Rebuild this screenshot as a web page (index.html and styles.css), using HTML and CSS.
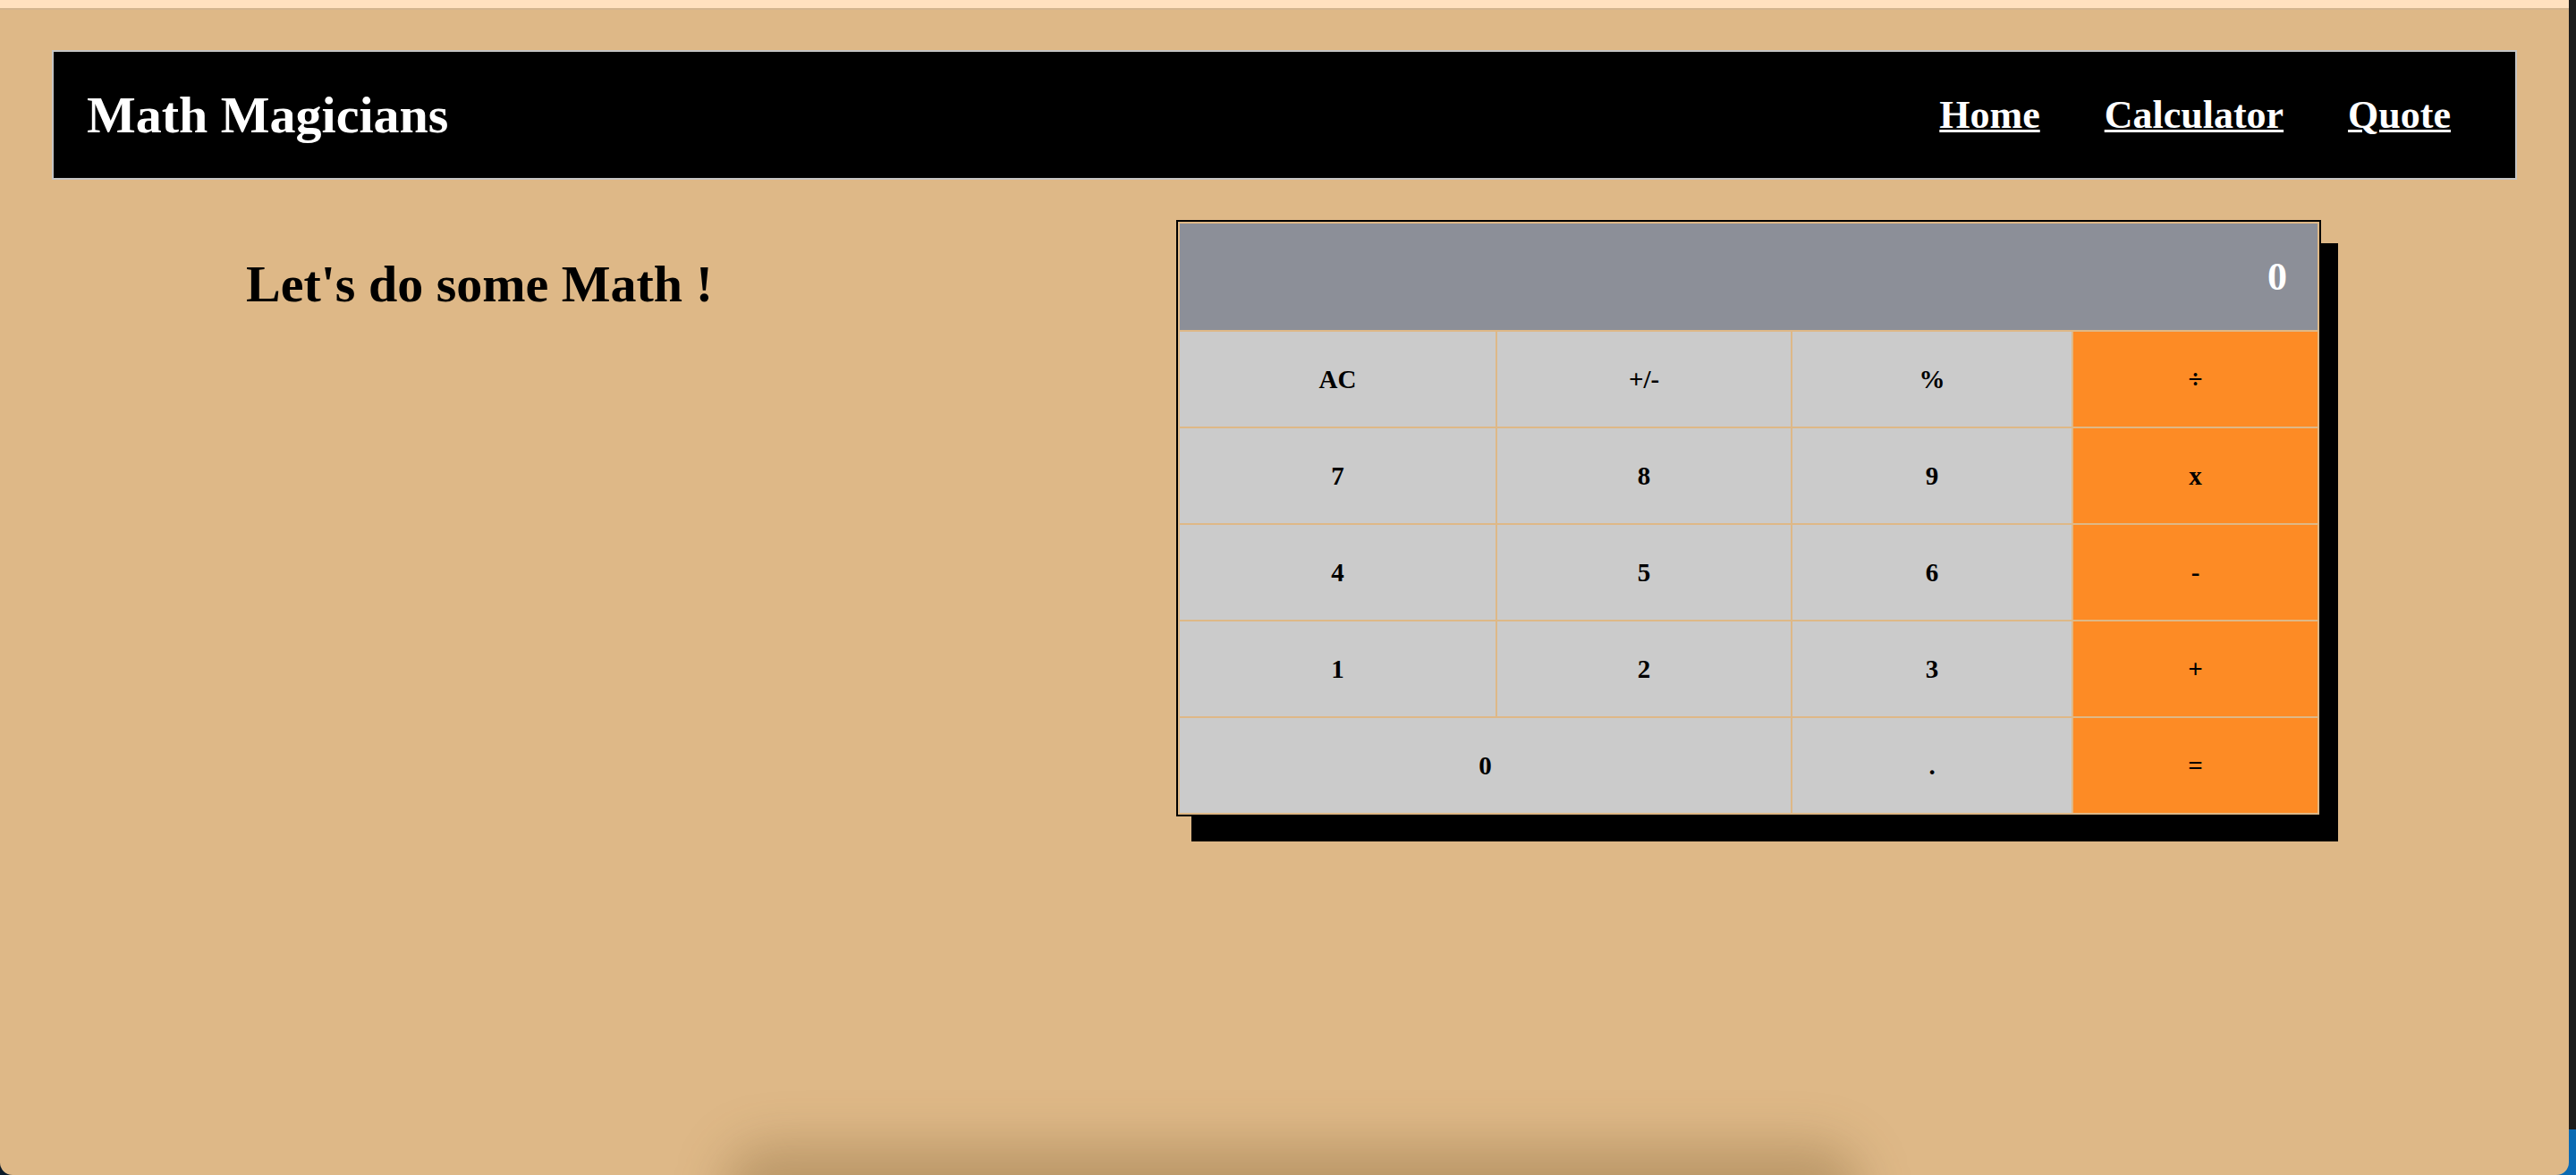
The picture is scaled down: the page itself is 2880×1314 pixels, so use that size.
FILE: index.html
```html
<!DOCTYPE html>
<html lang="en">
<head>
<meta charset="utf-8">
<title>Math Magicians</title>
<link rel="stylesheet" href="styles.css">
</head>
<body>
<div class="window">
  <div class="topstrip"></div>
  <nav class="nav">
    <h1 class="brand">Math Magicians</h1>
    <ul class="links">
      <li><a href="#">Home</a></li>
      <li><a href="#">Calculator</a></li>
      <li><a href="#">Quote</a></li>
    </ul>
  </nav>
  <main class="main">
    <h2 class="intro">Let's do some Math !</h2>
    <div class="calc">
      <div class="display">0</div>
      <button class="key">AC</button>
      <button class="key">+/-</button>
      <button class="key">%</button>
      <button class="key op">÷</button>
      <button class="key">7</button>
      <button class="key">8</button>
      <button class="key">9</button>
      <button class="key op">x</button>
      <button class="key">4</button>
      <button class="key">5</button>
      <button class="key">6</button>
      <button class="key op">-</button>
      <button class="key">1</button>
      <button class="key">2</button>
      <button class="key">3</button>
      <button class="key op">+</button>
      <button class="key zero">0</button>
      <button class="key">.</button>
      <button class="key op">=</button>
    </div>
  </main>
  <div class="dock-shadow"></div>
</div>
</body>
</html>
```

FILE: styles.css
```css
html {
  background:
    linear-gradient(to right, #0c1a28 0 30px, transparent 30px) left bottom / 100% 30px no-repeat,
    linear-gradient(#1b1b1b 1263px, #0a6ab3 1263px);
}
body {
  margin: 0;
  width: 2880px;
  height: 1314px;
  overflow: hidden;
  font-family: "Liberation Serif", "Times New Roman", serif;
}
.window {
  position: relative;
  width: 2872px;
  height: 1314px;
  background: #deb887;
  border-radius: 0 0 14px 14px;
  overflow: hidden;
}
.topstrip {
  height: 9px;
  background: #ffe1bf;
  border-bottom: 2px solid #d3b58f;
}
.nav {
  box-sizing: border-box;
  height: 145px;
  margin: 45px 58px 0;
  border: 2px solid #c4c4c4;
  background: #000;
  display: flex;
  align-items: center;
  justify-content: space-between;
  padding: 0 72px 0 37px;
}
.brand {
  margin: 0;
  color: #fff;
  font-size: 58px;
  font-weight: bold;
}
.links {
  list-style: none;
  margin: 0;
  padding: 0;
  display: flex;
  gap: 72px;
}
.links a {
  color: #fff;
  font-size: 44px;
  font-weight: bold;
  text-decoration: underline;
  text-decoration-thickness: 3px;
}
.main {
  display: flex;
  align-items: flex-start;
  padding: 45px 0 0 275px;
}
.intro {
  flex: 0 0 1040px;
  margin: 38px 0 0;
  font-size: 58px;
  font-weight: bold;
  color: #000;
}
.calc {
  display: grid;
  grid-template-columns: 353px 328px 312px 273px;
  grid-template-rows: 119px repeat(5, 106px);
  gap: 2px;
  padding: 2px;
  border: 2px solid #000;
  background: #deb887;
  box-shadow: 18px 27px 0 1px #000;
}
.display {
  grid-column: 1 / -1;
  background: #8c8f98;
  color: #fff;
  font-size: 44px;
  font-weight: bold;
  display: flex;
  align-items: center;
  justify-content: flex-end;
  padding-right: 34px;
}
.key {
  border: 0;
  margin: 0;
  padding: 0;
  background: #cbcbcb;
  color: #000;
  font-family: "Liberation Serif", "Times New Roman", serif;
  font-size: 29px;
  font-weight: bold;
}
.key.op {
  background: #fd8b25;
}
.key.zero {
  grid-column: span 2;
}
.dock-shadow {
  position: absolute;
  left: 810px;
  top: 1280px;
  width: 1270px;
  height: 120px;
  border-radius: 50px;
  background: rgba(90, 60, 20, 0.26);
  filter: blur(28px);
}
```
